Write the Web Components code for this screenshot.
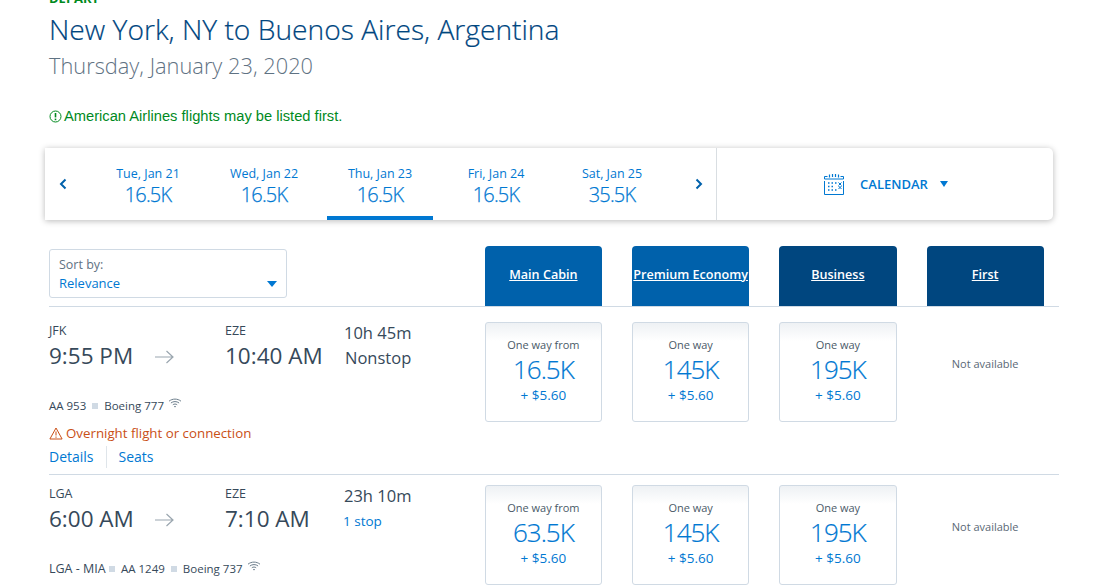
<!DOCTYPE html>
<html>
<head>
<meta charset="utf-8">
<title>Flights</title>
<style>
  html, body { margin: 0; height: 587px; overflow: hidden; background: #fff; }
  body { font-family: "Open Sans", "Liberation Sans", sans-serif; color: #36495a; }
</style>
</head>
<body>
<results-page>
  <trip-heading slot="heading"></trip-heading>
  <date-strip slot="strip">
    <date-tab day="Tue, Jan 21" price="16.5K"></date-tab>
    <date-tab day="Wed, Jan 22" price="16.5K"></date-tab>
    <date-tab day="Thu, Jan 23" price="16.5K" active></date-tab>
    <date-tab day="Fri, Jan 24" price="16.5K"></date-tab>
    <date-tab day="Sat, Jan 25" price="35.5K"></date-tab>
  </date-strip>
  <cabin-header slot="cabins"></cabin-header>
  <flight-row from="JFK" to="EZE" depart="9:55 PM" arrive="10:40 AM" duration="10h 45m" stops="Nonstop" slot="rows">
    <span slot="meta">AA 953</span>
    <span slot="meta">Boeing 777</span>
    <flight-notice slot="notice">Overnight flight or connection</flight-notice>
    <flight-links slot="links"></flight-links>
    <fare-card slot="fares" label="One way from" miles="16.5K"></fare-card>
    <fare-card slot="fares" label="One way" miles="145K"></fare-card>
    <fare-card slot="fares" label="One way" miles="195K"></fare-card>
    <fare-card slot="fares" unavailable></fare-card>
  </flight-row>
  <flight-row from="LGA" to="EZE" depart="6:00 AM" arrive="7:10 AM" duration="23h 10m" stops="1 stop" stoplink slot="rows">
    <span slot="route">LGA - MIA</span>
    <span slot="meta">AA 1249</span>
    <span slot="meta">Boeing 737</span>
    <fare-card slot="fares" label="One way from" miles="63.5K"></fare-card>
    <fare-card slot="fares" label="One way" miles="145K"></fare-card>
    <fare-card slot="fares" label="One way" miles="195K"></fare-card>
    <fare-card slot="fares" unavailable></fare-card>
  </flight-row>
</results-page>

<script>
const WIFI = `<svg width="14" height="10" viewBox="0 0 14 10" fill="none" stroke="#6e7f8d" stroke-width="1">
  <path d="M1 3.2C4.4.4 9.6.4 13 3.2M2.9 5C5.2 3.1 8.8 3.1 11.1 5M4.8 6.8C6 5.8 8 5.8 9.2 6.8"/>
  <path d="M7 9.6 5.9 8.3C6.5 7.9 7.5 7.9 8.1 8.3Z" fill="#6e7f8d" stroke="none"/></svg>`;

// Base class, saves repeating the attachShadow lines in each element
class ShadowElement extends HTMLElement {
  constructor() {
    super();
    this.attachShadow({mode: "open"});
  }
  attr(name) {
    return this.getAttribute(name) || "";
  }
}

class ResultsPage extends ShadowElement {
  connectedCallback() {
    this.shadowRoot.innerHTML = `
      <style>
        :host { display: block; width: 1103px; margin-top: -11px; }
        .strip { display: block; margin: 0 50px 26px 45px; }
      </style>
      <slot name="heading"></slot>
      <div class="strip"><slot name="strip"></slot></div>
      <slot name="cabins"></slot>
      <slot name="rows"></slot>
    `;
  }
}

class TripHeading extends ShadowElement {
  connectedCallback() {
    this.shadowRoot.innerHTML = `
      <style>
        :host { display: block; padding: 0 0 22px 49px; }
        .leg { font: 700 13px/18px "Open Sans", sans-serif; color: #008a1e; }
        h1 { margin: 3px 0 0; font: 300 28.2px/38px "Open Sans", sans-serif; color: #00467f; -webkit-text-stroke: .2px #00467f; }
        h2 { margin: 0; font: 300 21.8px/36px "Open Sans", sans-serif; color: #5f7283; }
        p { margin: 22px 0 0; display: flex; align-items: center; gap: 2px; font: 14.7px/20px "Liberation Sans", sans-serif; color: #008a1e; }
      </style>
      <div class="leg">DEPART</div>
      <h1>New York, NY to Buenos Aires, Argentina</h1>
      <h2>Thursday, January 23, 2020</h2>
      <p>
        <svg width="13" height="13" viewBox="0 0 13 13" fill="none" stroke="#008a1e">
          <circle cx="6.5" cy="6.5" r="5.5"/><path d="M6.5 3v4.4" stroke-width="1.6"/><path d="M6.5 8.6v1.6" stroke-width="1.6"/>
        </svg>
        <span>American Airlines flights may be listed first.</span>
      </p>
    `;
  }
}

class DateStrip extends ShadowElement {
  connectedCallback() {
    this.shadowRoot.innerHTML = `
      <style>
        :host { display: flex; height: 72px; background: #fff; border-radius: 0 5px 5px 0; box-shadow: 0 1px 6px rgba(0,0,0,.28); }
        .days { flex: 0 0 672px; box-sizing: border-box; display: flex; align-items: stretch; border-right: 1px solid #d9dee2; }
        .list { display: flex; margin-left: 9px; }
        .chev { flex: 0 0 36px; display: flex; align-items: center; justify-content: center; }
        .chev.next { flex: 0 0 28px; margin-left: 15px; }
        .calendar { flex: 1; display: flex; align-items: center; justify-content: center; gap: 16px; padding-left: 2px; color: #0078d2; font: 600 13px "Open Sans", sans-serif; }
        .caret { width: 0; height: 0; border: 4.5px solid transparent; border-top: 6px solid #0078d2; border-bottom: 0; margin-left: -4px; }
      </style>
      <div class="days">
        <div class="chev"><svg width="8" height="12" viewBox="0 0 8 12" fill="none" stroke="#0061ab" stroke-width="2"><path d="M6.5 1.5 2 6l4.5 4.5"/></svg></div>
        <div class="list"><slot></slot></div>
        <div class="chev next"><svg width="8" height="12" viewBox="0 0 8 12" fill="none" stroke="#0061ab" stroke-width="2"><path d="M1.5 1.5 6 6l-4.5 4.5"/></svg></div>
      </div>
      <div class="calendar">
        <svg width="20" height="22" viewBox="0 0 20 22" fill="none" stroke="#0078d2">
          <path d="M.5 6V3.5h3M16.500 3.500h3V6M.5 6h19M.5 8v13.500h19V8"/>
          <path d="M5.500 1.500v3M8.500 1v3M11.500 1v3M14.500 1.500v3" stroke-width="1.200"/>
          <path d="M4 10h1.500M7.500 10H9M11 10h1.500M4 13.500h1.500M7.500 13.500H9M4 17h1.500M7.500 17H9M11 17h1.500" stroke-width="1.500"/>
          <path d="M14.500 9.500l3 3M17.500 9.500l-3 3M14.500 13l3 3M17.500 13l-3 3" stroke-width="1"/>
        </svg>
        <span>CALENDAR</span>
        <span class="caret"></span>
      </div>
    `;
  }
}

class DateTab extends ShadowElement {
  connectedCallback() {
    this.shadowRoot.innerHTML = `
      <style>
        :host { display: block; width: 116px; box-sizing: border-box; text-align: center; color: #0078d2; padding: 0 5px; }
        .in { height: 72px; box-sizing: border-box; padding-top: 18px; }
        :host([active]) .in { border-bottom: 4px solid #0078d2; }
        .day { font: 400 12.5px/16px "Open Sans", sans-serif; }
        .price { font: 300 20px/26px "Open Sans", sans-serif; letter-spacing: -.8px; -webkit-text-stroke: .25px #0078d2; }
      </style>
      <div class="in">
        <div class="day">${this.attr("day")}</div>
        <div class="price">${this.attr("price")}</div>
      </div>
    `;
  }
}

class CabinHeader extends ShadowElement {
  connectedCallback() {
    const cabins = [["Main Cabin", "#0061ab"], ["Premium Economy", "#0061ab"], ["Business", "#00467f"], ["First", "#00467f"]];
    this.shadowRoot.innerHTML = `
      <style>
        :host { display: grid; grid-template-columns: 405.75px repeat(4, 117.25px); column-gap: 30px; width: 1010px; height: 60px; margin: 0 0 5px 49px; border-bottom: 1px solid #d0dae4; align-items: start; }
        .sort { box-sizing: border-box; width: 238px; height: 49px; margin-top: 3px; border: 1px solid #d0dae4; border-radius: 3px; padding: 5px 9px; position: relative; font: 400 12.5px/19px "Open Sans", sans-serif; color: #5f7283; }
        .sort b { display: block; font-weight: 400; font-size: 13px; color: #0078d2; }
        .caret { position: absolute; right: 9px; bottom: 10px; width: 0; height: 0; border: 5px solid transparent; border-top: 6px solid #0078d2; border-bottom: 0; }
        .tab { height: 60px; box-sizing: border-box; padding-bottom: 4px; display: flex; align-items: center; justify-content: center; border-radius: 4px 4px 0 0; color: #fff; font: 600 12.6px "Open Sans", sans-serif; text-decoration: underline; white-space: nowrap; }
      </style>
      <div class="sort">Sort by:<b>Relevance</b><span class="caret"></span></div>
      ${cabins.map(c => `<div class="tab" style="background:${c[1]}">${c[0]}</div>`).join("")}
    `;
  }
}

class FlightRow extends ShadowElement {
  connectedCallback() {
    const isLink = this.hasAttribute("stoplink");
    this.shadowRoot.innerHTML = `
      <style>
        :host { display: grid; grid-template-columns: 405.75px repeat(4, 117.25px); column-gap: 30px; width: 1010px; height: 162px; margin-left: 49px; border-bottom: 1px solid #d0dae4; }
        .info { padding-top: 10px; }
        .times { display: grid; grid-template-columns: 106px 70px 119px 1fr; }
        .code { font: 400 12.5px/18px "Open Sans", sans-serif; color: #36495a; }
        .time { font: 400 22.5px/32px "Open Sans", sans-serif; color: #36495a; white-space: nowrap; }
        .arrow { display: flex; align-items: flex-end; padding-bottom: 8px; }
        .dur { font: 400 16.5px/24px "Open Sans", sans-serif; margin-top: -1px; }
        .stops { font: 400 ${isLink ? "13.5px" : "16.5px"}/${isLink ? "27px" : "25px"} "Open Sans", sans-serif; color: ${isLink ? "#0078d2" : "#36495a"}; white-space: nowrap; margin-left: ${isLink ? "-1px" : "1px"}; }
        .meta { display: flex; align-items: center; margin-top: 25px; height: 18px; font: 400 11.5px/18px "Open Sans", sans-serif; white-space: nowrap; }
        ::slotted([slot="route"]) { display: inline-block; width: 54px; font-size: 12.5px; }
        ::slotted([slot="meta"]) { display: inline-flex; align-items: center; }
        ::slotted([slot="meta"])::before { content: ""; width: 6px; height: 6px; background: #d0dae4; margin: 0 6px; }
        ::slotted([slot="meta"]:first-child)::before { display: none; }
        .wifi { margin: -5px 0 0 4px; display: block; }
        ::slotted([slot="notice"]) { margin-top: 9px; }
        ::slotted([slot="links"]) { margin-top: 4px; }
      </style>
      <div class="info">
        <div class="times">
          <div><div class="code">${this.attr("from")}</div><div class="time">${this.attr("depart")}</div></div>
          <div class="arrow">
            <svg width="19" height="14" viewBox="0 0 19 14" fill="none" stroke="#9aa6af" stroke-width="1.200"><path d="M0 7h18M11.500 1l6.500 6-6.500 6"/></svg>
          </div>
          <div><div class="code">${this.attr("to")}</div><div class="time">${this.attr("arrive")}</div></div>
          <div><div class="dur">${this.attr("duration")}</div><div class="stops">${this.attr("stops")}</div></div>
        </div>
        <div class="meta"><slot name="route"></slot><slot name="meta"></slot><span class="wifi">${WIFI}</span></div>
        <slot name="notice"></slot>
        <slot name="links"></slot>
      </div>
      <slot name="fares" style="display:contents"></slot>
    `;
  }
}

class FlightNotice extends ShadowElement {
  connectedCallback() {
    this.shadowRoot.innerHTML = `
      <style>
        :host { display: flex; align-items: center; gap: 3px; font: 400 13.3px/18px "Open Sans", sans-serif; color: #c94f16; white-space: nowrap; }
      </style>
      <svg width="14" height="13" viewBox="0 0 14 13" fill="none" stroke="#c94f16"><path d="M7 1 .9 12h12.200Z" stroke-linejoin="round"/><path d="M7 4.500v4M7 9.500v1.300"/></svg>
      <slot></slot>
    `;
  }
}

class FlightLinks extends ShadowElement {
  connectedCallback() {
    this.shadowRoot.innerHTML = `
      <style>
        :host { display: flex; height: 22px; align-items: center; font: 400 14px/22px "Open Sans", sans-serif; color: #0078d2; }
        span + span { margin-left: 12px; padding-left: 12px; border-left: 1px solid #dfe5ea; }
      </style>
      <span>Details</span><span>Seats</span>
    `;
  }
}

class FareCard extends ShadowElement {
  connectedCallback() {
    if (this.hasAttribute("unavailable")) {
      this.shadowRoot.innerHTML = `
        <style>
          :host { display: flex; height: 100px; margin-top: 10px; align-items: center; justify-content: center; font: 400 11px "Open Sans", sans-serif; color: #5a6875; padding-bottom: 18px; box-sizing: border-box; }
        </style>
        Not available
      `;
      return;
    }
    this.shadowRoot.innerHTML = `
      <style>
        :host { display: block; height: 100px; margin-top: 10px; box-sizing: border-box; border: 1px solid #d0dae4; border-radius: 3px; text-align: center; padding-top: 14px; background: linear-gradient(#eef1f4, #fff 18px); }
        .label { font: 400 11px/16px "Open Sans", sans-serif; color: #4a5a68; white-space: nowrap; }
        .miles { font: 300 26px/32px "Open Sans", sans-serif; letter-spacing: -1px; color: #0078d2; -webkit-text-stroke: .2px #0078d2; }
        .fee { font: 400 13.5px/20px "Open Sans", sans-serif; color: #0078d2; }
      </style>
      <div class="label">${this.attr("label")}</div>
      <div class="miles">${this.attr("miles")}</div>
      <div class="fee">+ $5.60</div>
    `;
  }
}

customElements.define("results-page", ResultsPage);
customElements.define("trip-heading", TripHeading);
customElements.define("date-strip", DateStrip);
customElements.define("date-tab", DateTab);
customElements.define("cabin-header", CabinHeader);
customElements.define("flight-row", FlightRow);
customElements.define("flight-notice", FlightNotice);
customElements.define("flight-links", FlightLinks);
customElements.define("fare-card", FareCard);
</script>
</body>
</html>
